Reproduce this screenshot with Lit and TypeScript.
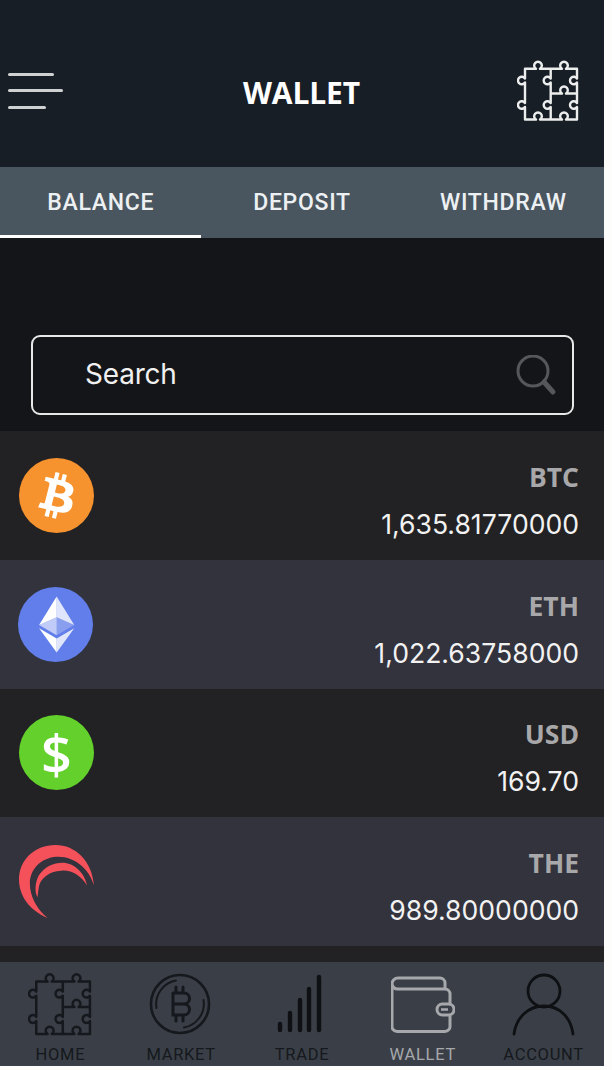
import { LitElement, html, css, svg } from "lit";
import { customElement } from "lit/decorators.js";

const puzzle = (cls: string) => html`<svg class=${cls} viewBox="0 0 62 61" fill="none" stroke="currentColor" stroke-width="2.4" stroke-linejoin="round">
  <path d="M8 8.8H19a3.8 3.8 0 1 1 4 0H45a3.8 3.8 0 1 1 4 0H60V18.5a3.8 3.8 0 1 0 0 4V43a3.8 3.8 0 1 0 0 4V59.5H49a3.8 3.8 0 1 0 -4 0H23a3.8 3.8 0 1 0 -4 0H8V47a3.8 3.8 0 1 1 0 -4V22.5a3.8 3.8 0 1 1 0 -4Z"/>
  <path d="M33.7 8.8V18.5a3.8 3.8 0 1 0 0 4V43a3.8 3.8 0 1 0 0 4V59.5"/>
  <path d="M33.7 33.5H45a3.8 3.8 0 1 1 4 0H60"/>
</svg>`;

const btc = svg`<circle cx="16" cy="16" r="16" fill="#f6932f"/><path fill="#fff" d="M23.189 14.02c.314-2.096-1.283-3.223-3.465-3.975l.708-2.84-1.728-.43-.69 2.765c-.454-.114-.92-.22-1.385-.326l.695-2.783L15.596 6l-.708 2.839c-.376-.086-.746-.17-1.104-.26l.002-.009-2.384-.595-.46 1.846s1.283.294 1.256.312c.7.175.826.638.805 1.006l-.806 3.235c.048.012.11.03.18.057l-.183-.045-1.13 4.532c-.086.212-.303.531-.793.41.018.025-1.256-.313-1.256-.313l-.858 1.978 2.25.561c.418.105.828.215 1.231.318l-.715 2.872 1.727.43.708-2.84c.472.127.93.245 1.378.357l-.706 2.828 1.728.43.715-2.866c2.948.558 5.164.333 6.097-2.333.752-2.146-.037-3.385-1.588-4.192 1.13-.26 1.98-1.003 2.207-2.538zm-3.95 5.538c-.533 2.147-4.148.986-5.32.695l.95-3.805c1.172.293 4.929.872 4.37 3.11zm.535-5.569c-.487 1.953-3.495.96-4.47.717l.86-3.45c.975.243 4.118.696 3.61 2.733z"/>`;

const eth = svg`<circle cx="16" cy="16" r="16" fill="#627eea"/><g fill="#fff"><path fill-opacity=".8" d="M16.498 4v8.87l7.497 3.35z"/><path d="M16.498 4L9 16.22l7.498-3.35z"/><path fill-opacity=".8" d="M16.498 21.968v6.027L24 17.616z"/><path d="M16.498 27.995v-6.028L9 17.616z"/><path fill-opacity=".25" d="M16.498 20.573l7.497-4.353-7.497-3.348z"/><path fill-opacity=".6" d="M9 16.22l7.498 4.353v-7.701z"/></g>`;

const the = svg`<g fill="#f5515b">
  <path d="M29 75C10 67 0 52 0 36 0 16 16 1 37 1 57 1 74 17 76 42 71 25 56 12 38 13 22 14 11 26 11 40 11 53 18 66 29 75Z"/>
  <path d="M19 54C15 49 17 37 20 32 26 23 35 19 44 19 55 19 66 28 69 42 63 32 53 26 43 27 30 27 21 36 20 44 19.5 47 19 51 19 54Z"/>
</g>`;

const rows = [
  { cls: "dark", sym: "BTC", val: "1,635.81770000", kind: "btc" },
  { cls: "light", sym: "ETH", val: "1,022.63758000", kind: "eth" },
  { cls: "dark", sym: "USD", val: "169.70", kind: "usd" },
  { cls: "light", sym: "THE", val: "989.80000000", kind: "the" },
];

@customElement("app-root")
export class AppRoot extends LitElement {
  static styles = css`
    :host { display: block; width: 612px; height: 1070px; background: #fdfdfb; overflow: hidden; }
    .app { width: 604px; height: 1066px; display: flex; flex-direction: column; background: #141518; font-family: "Open Sans", sans-serif; }
    .header { height: 167px; flex: none; background: #181e26; display: grid; grid-template-columns: 1fr auto 1fr; align-items: center; padding: 14px 25px 0 8px; box-sizing: border-box; color: #fff; }
    .burger { display: flex; flex-direction: column; gap: 13.5px; }
    .burger i { display: block; height: 3px; background: #cfd0d2; border-radius: 2px; }
    .burger i:nth-child(1) { width: 46px; }
    .burger i:nth-child(2) { width: 55px; }
    .burger i:nth-child(3) { width: 38px; }
    .title { font-size: 30px; font-weight: 700; letter-spacing: -0.1px; margin: 3px 0 0 16px; }
    .hpuzzle { width: 62px; height: 61px; justify-self: end; color: #eceded; }
    .tabs { height: 71px; flex: none; background: #49555f; display: grid; grid-template-columns: repeat(3, 1fr); }
    .tab { display: flex; align-items: center; justify-content: center; color: #edf0f2; font: 500 23px Roboto, sans-serif; letter-spacing: 0.7px; box-sizing: border-box; height: 71px; }
    .tab.on { border-bottom: 3px solid #fff; padding-top: 3px; }
    .search-wrap { height: 193px; flex: none; box-sizing: border-box; padding: 97px 30px 0 31px; }
    .search { height: 80px; box-sizing: border-box; border: 2px solid #e8e8e8; border-radius: 9px; display: flex; align-items: center; justify-content: space-between; padding: 0 14px 2px 52px; color: #f0f0f0; font: 400 28px Inter, sans-serif; letter-spacing: -0.2px; }
    .search svg { width: 42px; height: 42px; margin-top: 3px; }
    .row { height: 128.75px; flex: none; display: flex; align-items: center; justify-content: space-between; padding: 0 25px 0 18px; box-sizing: border-box; }
    .row.dark { background: #222224; }
    .row.light { background: #32333d; }
    .coin { width: 75px; height: 75px; display: block; margin-left: 1px; flex: none; }
    .coin.eth { margin-left: 0; }
    .usd { width: 75px; height: 75px; margin-left: 1px; border-radius: 50%; background: #63d02c; color: #fff; display: flex; align-items: center; justify-content: center; font: 600 54px "Open Sans", sans-serif; line-height: 1; }
    .txt { text-align: right; display: flex; flex-direction: column; gap: 13px; margin-top: 11px; }
    .sym { font-size: 26.5px; font-weight: 700; color: #a8a8aa; line-height: 34px; }
    .val { font: 400 26.6px Inter, sans-serif; color: #f2f2f2; line-height: 35px; }
    .gap { height: 16px; flex: none; background: #222224; }
    .nav { flex: 1; background: #3a3f47; display: grid; grid-template-columns: repeat(5, 1fr); color: #15181c; }
    .item { display: flex; flex-direction: column; align-items: center; padding-top: 10px; box-sizing: border-box; font: 400 16.5px Roboto, sans-serif; letter-spacing: 0.7px; }
    .item.active { color: #a6a8ac; }
    .item span { margin-top: 9px; line-height: 19px; }
    .ico { width: 64px; height: 64px; display: block; }
    .npuzzle { width: 64px; height: 64px; }
  `;

  private coin(kind: string) {
    if (kind === "usd") return html`<div class="usd">$</div>`;
    if (kind === "btc") return html`<svg class="coin" viewBox="0 0 32 32">${btc}</svg>`;
    if (kind === "eth") return html`<svg class="coin eth" viewBox="0 0 32 32">${eth}</svg>`;
    return html`<svg class="coin" viewBox="0 0 76 76">${the}</svg>`;
  }

  render() {
    return html`<div class="app">
      <div class="header">
        <div class="burger"><i></i><i></i><i></i></div>
        <div class="title">WALLET</div>
        ${puzzle("hpuzzle")}
      </div>
      <div class="tabs">
        <div class="tab on">BALANCE</div><div class="tab">DEPOSIT</div><div class="tab">WITHDRAW</div>
      </div>
      <div class="search-wrap"><div class="search"><span>Search</span>
        <svg viewBox="0 0 42 42" fill="none" stroke="#55575b"><circle cx="17" cy="16" r="15" stroke-width="3"/><path d="M28 27L37 37" stroke-width="5" stroke-linecap="round"/></svg>
      </div></div>
      ${rows.map((r) => html`<div class="row ${r.cls}">${this.coin(r.kind)}<div class="txt"><div class="sym">${r.sym}</div><div class="val">${r.val}</div></div></div>`)}
      <div class="gap"></div>
      <div class="nav">
        <div class="item">${puzzle("npuzzle")}<span>HOME</span></div>
        <div class="item"><svg class="ico" viewBox="0 0 64 64" fill="none" stroke="currentColor" stroke-width="2.6" stroke-linecap="round">
          <circle cx="31" cy="32" r="29"/>
          <path stroke-width="2" d="M7.5 36A24 24 0 0 1 27 8.5M54.5 28A24 24 0 0 1 35 55.5"/>
          <path stroke-width="3" d="M24 21H35a5.5 5.5 0 0 1 0 11H24M35 32a5.5 5.5 0 0 1 0 11H24V21M27 21V15M34 21V15M27 43V49M34 43V49"/>
        </svg><span>MARKET</span></div>
        <div class="item"><svg class="ico" viewBox="0 0 64 64" fill="none" stroke="#0e1013" stroke-width="4.4" stroke-linecap="round">
          <path d="M10 52V58M20 41V58M30 28V58M39 17V58M49 5V58"/>
        </svg><span>TRADE</span></div>
        <div class="item active"><svg class="ico" viewBox="0 0 64 64" fill="none" stroke="currentColor" stroke-width="3" stroke-linejoin="round">
          <path d="M1 12V54a5 5 0 0 0 5 5.5H54a5 5 0 0 0 5-5.5V44M59 32V22a5 5 0 0 0-5-5H7a5.5 5.5 0 0 1-6-5 6 6 0 0 1 6-6H49a5 5 0 0 1 5 5V17"/>
          <rect x="46" y="32" width="17" height="11" rx="5.5"/>
          <path d="M50 37.5H57" stroke-width="2.5"/>
        </svg><span>WALLET</span></div>
        <div class="item"><svg class="ico" viewBox="0 0 64 64" fill="none" stroke="#0e1013" stroke-width="2.8" stroke-linecap="round">
          <circle cx="32" cy="19" r="16"/>
          <path d="M2 62C4 46 16 34 32 34S59 46 61 62"/>
        </svg><span>ACCOUNT</span></div>
      </div>
    </div>`;
  }
}
